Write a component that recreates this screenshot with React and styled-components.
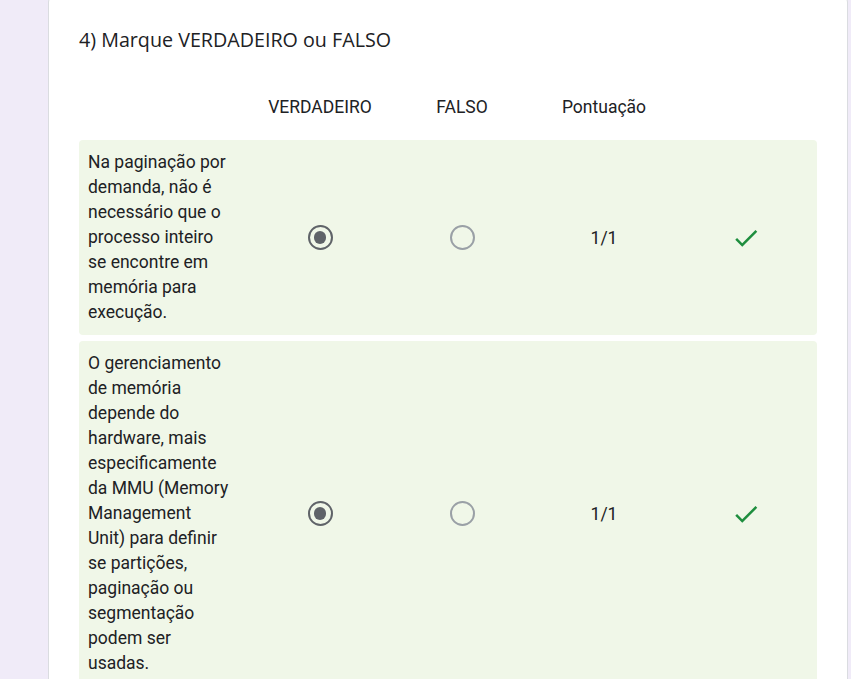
import React from "react";
import styled, { createGlobalStyle } from "styled-components";

const GlobalStyle = createGlobalStyle`
  html, body {
    margin: 0;
    padding: 0;
    background: #f0ebf8;
    overflow: hidden;
  }
  body {
    font-family: Roboto, "Liberation Sans", Arial, sans-serif;
    color: #202124;
  }
`;

const Page = styled.div`
  display: flex;
  align-items: flex-start;
  padding: 0 3px 0 48px;
`;

const Card = styled.section`
  flex: 1;
  margin-top: -6px;
  background: #fff;
  border: 1px solid #dadce0;
  border-radius: 8px;
  padding: 33px 30px 24px 30px;
`;

const Title = styled.h2`
  margin: 0 0 31px 0;
  font-family: "Open Sans", "Liberation Sans", sans-serif;
  font-weight: 400;
  font-size: 19.7px;
  line-height: 24px;
  color: #202124;
`;

const Grid = styled.div`
  display: grid;
  grid-template-columns: 170px repeat(4, 1fr);
  row-gap: 6px;
`;

const HeaderCell = styled.div`
  height: 48px;
  display: flex;
  align-items: center;
  justify-content: center;
  font-size: 17.5px;
  margin-bottom: 3px;
`;

const Row = styled.div`
  display: contents;
`;

const Cell = styled.div`
  background: #f0f7e8;
  display: flex;
  align-items: center;
  justify-content: center;
  ${(p) => p.$last && "border-radius: 0 4px 4px 0;"}
`;

const Label = styled(Cell)`
  justify-content: flex-start;
  padding: 10px 18px 10px 9px;
  font-size: 17.5px;
  line-height: 25px;
  border-radius: 4px 0 0 4px;
`;

const Radio = styled.span`
  box-sizing: border-box;
  width: 25px;
  height: 25px;
  border-radius: 50%;
  border: 2.5px solid ${(p) => (p.$checked ? "#5f6368" : "#9aa0a6")};
  display: flex;
  align-items: center;
  justify-content: center;
  &::after {
    content: "";
    width: 12.5px;
    height: 12.5px;
    border-radius: 50%;
    background: ${(p) => (p.$checked ? "#5f6368" : "transparent")};
  }
`;

const Score = styled.span`
  font-size: 17.5px;
`;

const Check = () => (
  <svg width="30" height="30" viewBox="0 0 24 24" fill="#1e8e3e">
    <path d="M9 16.17L4.83 12l-1.42 1.41L9 19 21 7l-1.41-1.41z" />
  </svg>
);

const items = [
  {
    text: "Na paginação por demanda, não é necessário que o processo inteiro se encontre em memória para execução.",
    answer: true,
  },
  {
    text: "O gerenciamento de memória depende do hardware, mais especificamente da MMU (Memory Management Unit) para definir se partições, paginação ou segmentação podem ser usadas.",
    answer: true,
  },
];

export default function App() {
  return (
    <>
      <GlobalStyle />
      <Page>
        <Card>
          <Title>4) Marque VERDADEIRO ou FALSO</Title>
          <Grid>
            <HeaderCell />
            <HeaderCell>VERDADEIRO</HeaderCell>
            <HeaderCell>FALSO</HeaderCell>
            <HeaderCell>Pontuação</HeaderCell>
            <HeaderCell />
            {items.map((item, i) => (
              <Row key={i}>
                <Label>{item.text}</Label>
                <Cell>
                  <Radio $checked={item.answer} />
                </Cell>
                <Cell>
                  <Radio $checked={!item.answer} />
                </Cell>
                <Cell>
                  <Score>1/1</Score>
                </Cell>
                <Cell $last>
                  <Check />
                </Cell>
              </Row>
            ))}
          </Grid>
        </Card>
      </Page>
    </>
  );
}
